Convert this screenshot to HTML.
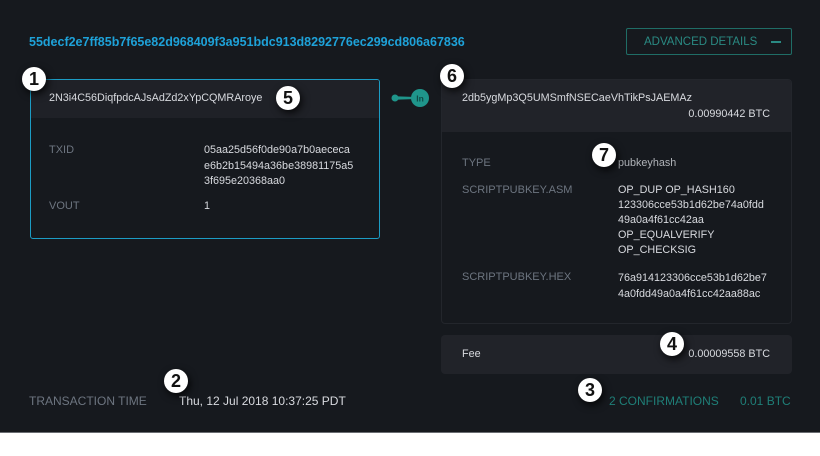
<!DOCTYPE html>
<html><head><meta charset="utf-8"><style>
*{margin:0;padding:0;box-sizing:border-box}
body{width:820px;height:456px;background:#fff;position:relative;overflow:hidden;font-family:"Liberation Sans",sans-serif;font-size:11px;color:#d4d6da}
#bg{position:absolute;left:0;top:0;width:820px;height:433px;background:#16191e;border-bottom:1px solid #6a6d72}
.a{position:absolute;white-space:nowrap;line-height:15px}
.lbl{color:#6d7580;font-size:11px}
.val{color:#d8dadf;font-size:10.8px}
.badge{position:absolute;width:24px;height:24px;border-radius:50%;background:#fff;color:#111;font-weight:bold;font-size:18px;line-height:24px;text-align:center;box-shadow:2px 3px 8px rgba(0,0,0,.8)}
</style></head><body>
<div id="bg"></div>
<div class="a" style="left:29px;top:35px;color:#1ea2d9;font-weight:bold;font-size:12.5px">55decf2e7ff85b7f65e82d968409f3a951bdc913d8292776ec299cd806a67836</div>
<div class="a" style="left:626px;top:28px;width:166px;height:27px;border:1.5px solid #1f6d66;border-radius:2px"></div>
<div class="a" style="left:644px;top:35px;color:#2a8a83;font-size:11.5px">ADVANCED DETAILS</div>
<div class="a" style="left:771px;top:41px;width:10px;height:2px;background:#2a8a83"></div>

<div class="a" style="left:30px;top:79px;width:350px;height:160px;border:1px solid #1c9cc4;border-radius:3px;overflow:hidden">
 <div style="height:38px;background:#1f2127"></div>
</div>
<div class="a val" style="left:49px;top:91px">2N3i4C56DiqfpdcAJsAdZd2xYpCQMRAroye</div>
<div class="a lbl" style="left:49px;top:143px">TXID</div>
<div class="a val" style="left:204px;top:143px;line-height:15.5px">05aa25d56f0de90a7b0aececa<br>e6b2b15494a36be38981175a5<br>3f695e20368aa0</div>
<div class="a lbl" style="left:49px;top:199px">VOUT</div>
<div class="a val" style="left:204px;top:199px">1</div>

<svg class="a" style="left:388px;top:88px" width="44" height="22"><circle cx="7" cy="10" r="3.5" fill="#1f958b"/><path d="M7 8.3 L28 9 L28 11 L7 11.7Z" fill="#1f958b"/><circle cx="32" cy="10" r="9" fill="#1f958b"/><text x="32" y="13.5" font-size="8.5" font-family="Liberation Sans" font-weight="bold" fill="#0f4a46" text-anchor="middle">In</text></svg>

<div class="a" style="left:441px;top:79px;width:351px;height:245px;border:1px solid #23262c;border-radius:4px;overflow:hidden">
 <div style="height:52px;background:#212329"></div>
</div>
<div class="a val" style="left:462px;top:91px">2db5ygMp3Q5UMSmfNSECaeVhTikPsJAEMAz</div>
<div class="a val" style="left:620px;width:150px;text-align:right;top:107px">0.00990442 BTC</div>
<div class="a lbl" style="left:462px;top:156px">TYPE</div>
<div class="a val" style="left:618px;top:156px;color:#b0b3b8">pubkeyhash</div>
<div class="a lbl" style="left:462px;top:183px">SCRIPTPUBKEY.ASM</div>
<div class="a val" style="left:618px;top:183px">OP_DUP OP_HASH160<br>123306cce53b1d62be74a0fdd<br>49a0a4f61cc42aa<br>OP_EQUALVERIFY<br>OP_CHECKSIG</div>
<div class="a lbl" style="left:462px;top:270px">SCRIPTPUBKEY.HEX</div>
<div class="a val" style="left:618px;top:270px;line-height:16px">76a914123306cce53b1d62be7<br>4a0fdd49a0a4f61cc42aa88ac</div>

<div class="a" style="left:441px;top:335px;width:351px;height:39px;background:#212329;border-radius:4px"></div>
<div class="a val" style="left:462px;top:347px">Fee</div>
<div class="a val" style="left:620px;width:150px;text-align:right;top:347px">0.00009558 BTC</div>

<div class="a lbl" style="left:29px;top:394px;font-size:12px">TRANSACTION TIME</div>
<div class="a val" style="left:179px;top:394px;font-size:12px">Thu, 12 Jul 2018 10:37:25 PDT</div>
<div class="a" style="left:609px;top:394px;color:#1f7f78;font-size:12px">2 CONFIRMATIONS</div>
<div class="a" style="left:740px;top:394px;color:#1f7f78;font-size:12px">0.01 BTC</div>

<div class="badge" style="left:22px;top:67px">1</div>
<div class="badge" style="left:164px;top:369px">2</div>
<div class="badge" style="left:578px;top:378px">3</div>
<div class="badge" style="left:660px;top:332px">4</div>
<div class="badge" style="left:276px;top:86px">5</div>
<div class="badge" style="left:440px;top:64px">6</div>
<div class="badge" style="left:592px;top:143px">7</div>
</body></html>
